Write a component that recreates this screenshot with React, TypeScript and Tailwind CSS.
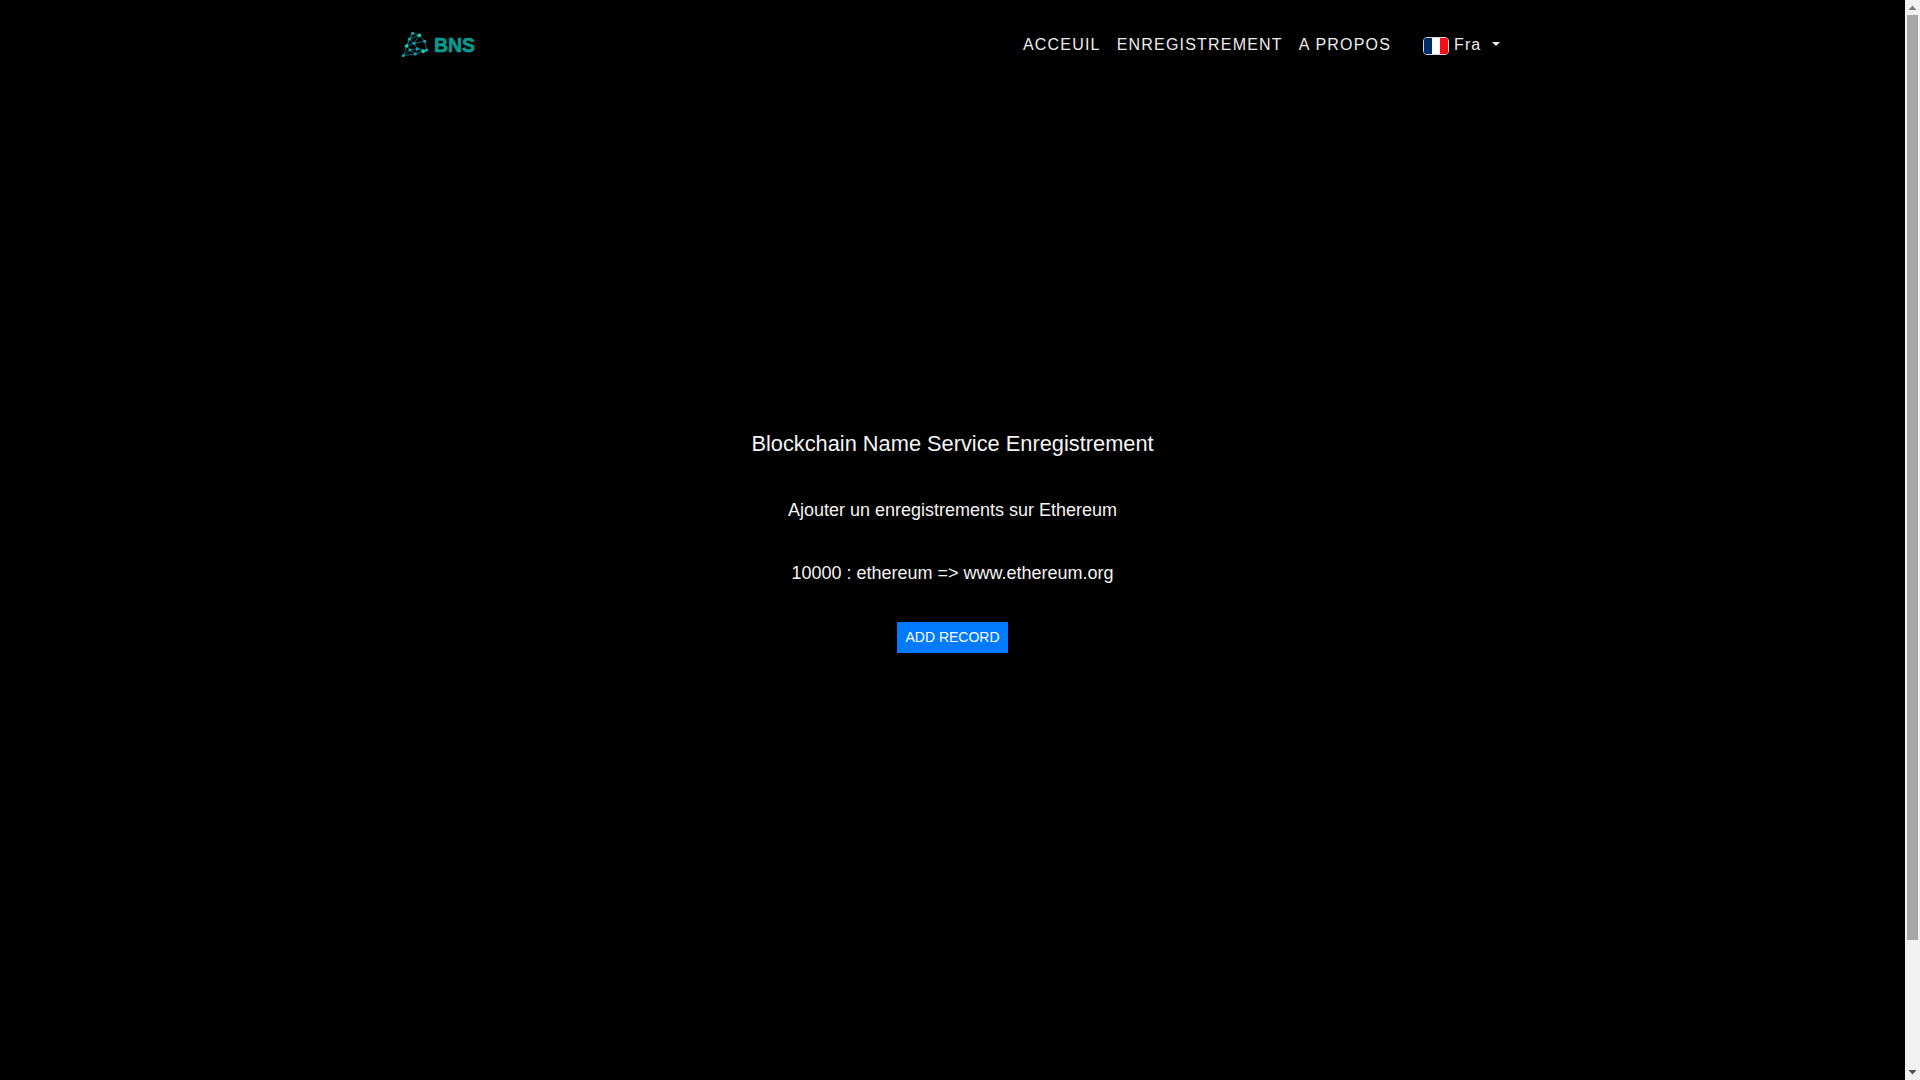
const font = { fontFamily: '"Liberation Sans", Arial, sans-serif' };

function Logo() {
  const pts: [number, number, number][] = [
    [68, 38, 0], [88, 44, 1], [104, 62, 0], [110, 88, 0], [100, 92, 1], [76, 100, 0], [40, 105, 0], [50, 76, 1],
    [58, 55, 0], [72, 68, 0], [82, 84, 0], [60, 88, 0],
  ];
  const links = [
    [0, 1], [1, 2], [2, 3], [3, 4], [4, 5], [5, 6], [6, 7], [7, 8], [8, 0], [8, 1], [8, 9], [9, 1], [9, 2], [9, 10],
    [10, 4], [10, 3], [10, 5], [7, 9], [7, 11], [11, 6], [11, 5], [11, 10], [7, 0],
  ];
  return (
    <svg width="26" height="25" viewBox="36 34 78 75" className="block shrink-0">
      {links.map(([a, b], i) => (
        <line key={i} x1={pts[a][0]} y1={pts[a][1]} x2={pts[b][0]} y2={pts[b][1]} stroke="#0f7f8c" strokeWidth="2.4" />
      ))}
      {pts.map(([x, y, hi], i) => (
        <circle key={i} cx={x} cy={y} r={hi ? 5.5 : 4.5} fill={hi ? "#12d8b0" : "#12a8bc"} />
      ))}
    </svg>
  );
}

function Flag() {
  return (
    <span className="mt-[2px] flex h-[18px] w-[26px] overflow-hidden rounded-[4px] border border-[#cfd3e0]">
      <span className="flex-1 bg-[#002a6c]" />
      <span className="flex-1 bg-white" />
      <span className="flex-1 bg-[#f50f1a]" />
    </span>
  );
}

export default function App() {
  return (
    <div style={font} className="flex h-screen overflow-hidden bg-black text-[#f4f4f4]">
      <div className="flex min-w-0 flex-1 flex-col">
        <nav className="mx-auto flex h-[89px] w-[1140px] shrink-0 items-center justify-between pr-[15px] pl-[19px]">
          <div className="flex items-center gap-[6px]">
            <Logo />
            <span className="origin-left scale-x-[0.92] text-[21px] leading-none font-bold text-[#0a9a8f] [-webkit-text-stroke:0.7px_#0a9a8f]">BNS</span>
          </div>
          <div className="flex items-center">
            <a className="px-2 text-[16px] tracking-[1.2px] text-[#ececec]">ACCEUIL</a>
            <a className="px-2 text-[16px] tracking-[1.2px] text-[#ececec]">ENREGISTREMENT</a>
            <a className="px-2 text-[16px] tracking-[1.2px] text-[#ececec]">A PROPOS</a>
            <div className="ml-[16px] flex items-center px-2 text-[16px] tracking-[1px] text-[#ececec]">
              <Flag />
              <span className="ml-[5px]">Fra</span>
              <span className="mb-[1px] ml-[10.4px] h-0 w-0 border-x-[4.8px] border-t-[4.8px] border-x-transparent border-t-[#f0f0f0]" />
            </div>
          </div>
        </nav>
        <main className="flex flex-col items-center pt-[340px] text-center">
          <h1 className="text-[21.8px] leading-[29px] font-normal">Blockchain Name Service Enregistrement</h1>
          <p className="mt-[39px] text-[18px] leading-[27px]">Ajouter un enregistrements sur Ethereum</p>
          <p className="mt-[36px] text-[18px] leading-[27px]">10000 : ethereum =&gt; www.ethereum.org</p>
          <button className="mt-[35px] h-[31px] bg-[#007bff] px-[8px] text-[14px] text-white">ADD RECORD</button>
        </main>
      </div>
      <aside className="flex w-[15px] shrink-0 flex-col items-center bg-[#f1f1f1]">
        <svg width="15" height="15" viewBox="0 0 15 15" className="shrink-0"><path d="M7.5 5.5 L11.5 10 H3.5 Z" fill="#7d7d7d" /></svg>
        <div className="h-[925px] w-[11px] shrink-0 bg-[#a6a6a6]" />
        <div className="flex-1" />
        <svg width="15" height="15" viewBox="0 0 15 15" className="shrink-0"><path d="M3.5 5 H11.5 L7.5 9.5 Z" fill="#505050" /></svg>
      </aside>
    </div>
  );
}
